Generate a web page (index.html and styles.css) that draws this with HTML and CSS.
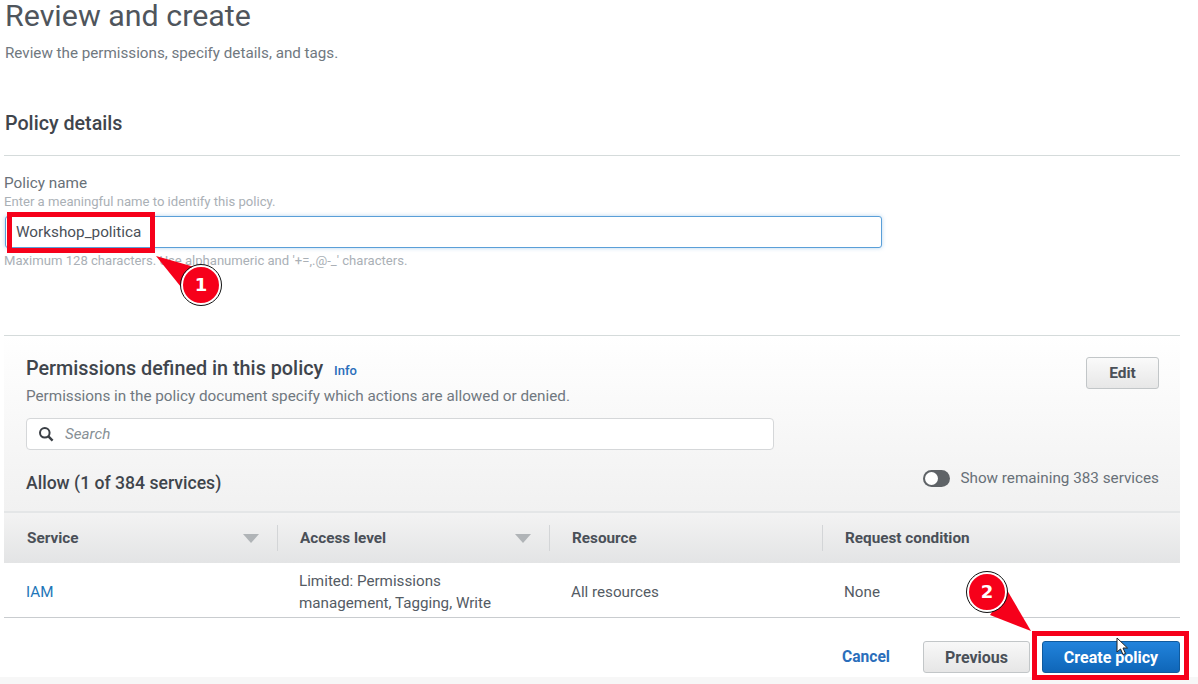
FILE: index.html
```html
<!DOCTYPE html>
<html lang="en">
<head>
  <meta charset="UTF-8" />
  <title>Review and create</title>
  <link rel="stylesheet" href="styles.css">
</head>
<body>
  <div class="page">
    <h1>Review and create</h1>
    <p class="subtitle">Review the permissions, specify details, and tags.</p>

    <h2 class="section-title">Policy details</h2>
    <div class="details">
      <div class="label">Policy name</div>
      <div class="hint">Enter a meaningful name to identify this policy.</div>
      <input class="name-input" type="text" value="Workshop_politica">
      <div class="hint hint-below">Maximum 128 characters. Use alphanumeric and '+=,.@-_' characters.</div>
    </div>

    <div class="panel">
      <div class="panel-head">
        <div>
          <h2 class="panel-title">Permissions defined in this policy <a class="info">Info</a></h2>
          <p class="panel-desc">Permissions in the policy document specify which actions are allowed or denied.</p>
        </div>
        <button class="btn btn-edit">Edit</button>
      </div>
      <div class="search">
        <svg width="16" height="16" viewBox="0 0 16 16"><circle cx="6.8" cy="6.8" r="4.8" fill="none" stroke="#3a3f45" stroke-width="2"/><path d="M10.4 10.4L14.6 14.6" stroke="#3a3f45" stroke-width="2.4"/></svg>
        <span>Search</span>
      </div>
      <div class="allow-row">
        <div class="allow">Allow (1 of 384 services)</div>
        <div class="toggle-wrap">
          <span class="toggle"><i></i></span>
          <span>Show remaining 383 services</span>
        </div>
      </div>
    </div>

    <div class="table">
      <div class="row row-head">
        <div class="cell c1">Service <b class="caret"></b></div>
        <div class="cell c2">Access level <b class="caret"></b></div>
        <div class="cell c3">Resource</div>
        <div class="cell c4">Request condition</div>
      </div>
      <div class="row row-body">
        <div class="cell c1"><a class="link">IAM</a></div>
        <div class="cell c2">Limited: Permissions management, Tagging, Write</div>
        <div class="cell c3">All resources</div>
        <div class="cell c4">None</div>
      </div>
    </div>

    <div class="actions">
      <a class="cancel">Cancel</a>
      <button class="btn btn-prev">Previous</button>
      <button class="btn btn-primary">Create policy</button>
    </div>
  </div>
  <div class="bottom-strip"></div>

  <!-- red markers drawn on top of the capture -->
  <svg class="arrows" width="1198" height="684" viewBox="0 0 1198 684">
    <path d="M156 256L198 268L181 287Z" fill="#f6001a"/>
    <path d="M1031 631L1007 590L990 615Z" fill="#f6001a"/>
  </svg>
  <div class="mark mark-one"></div>
  <div class="mark mark-two"></div>
  <div class="badge badge-one">1</div>
  <div class="badge badge-two">2</div>
  <svg class="cursor" width="14" height="20" viewBox="0 0 14 20"><path d="M1 1L1 15L4.5 12L7 17.5L9.5 16.5L7 11L11.5 11Z" fill="#fff" stroke="#222" stroke-width="1"/></svg>
</body>
</html>
```

FILE: styles.css
```css
body {
  margin: 0;
  height: 684px;
  overflow: hidden;
  background: #fff;
  font-family: Roboto, sans-serif;
  color: #545b64;
}

.page {
  width: 1176px;
  margin-left: 4px;
}

h1 {
  margin: 0;
  padding-left: 1px;
  font-size: 30.4px;
  font-weight: 400;
  line-height: 32px;
  color: #4f555c;
}

.subtitle {
  margin: 12px 0 0;
  padding-left: 1px;
  font-size: 15.2px;
  line-height: 18px;
  color: #707880;
}

.section-title {
  margin: 46px 0 0;
  height: 47px;
  padding-left: 1px;
  font-size: 19.7px;
  font-weight: 500;
  line-height: 32px;
  color: #3f454c;
  border-bottom: 1px solid #d5dbdb;
}

.details {
  height: 180px;
  box-sizing: border-box;
  padding-top: 19px;
  border-bottom: 1px solid #d5dbdb;
}

.label {
  margin-bottom: 2px;
  font-size: 15.3px;
  line-height: 17px;
  color: #687078;
}

.hint {
  font-size: 13.1px;
  line-height: 16px;
  color: #aab0b6;
}

.hint-below {
  margin-top: 5px;
}

.name-input {
  display: block;
  width: 877px;
  height: 32px;
  box-sizing: border-box;
  margin: 6px 0 0 1px;
  padding: 0 10px;
  border: 1px solid #5a9fd8;
  border-radius: 3px;
  box-shadow: 0 0 4px rgba(90, 160, 220, 0.45);
  font-family: Roboto, sans-serif;
  font-size: 15.3px;
  color: #4a5058;
  outline: none;
}

.panel {
  height: 175px;
  box-sizing: border-box;
  padding: 0 21px 0 22px;
  background: linear-gradient(#fff, #f1f1f1);
}

.panel-head {
  display: flex;
  justify-content: space-between;
  align-items: flex-start;
}

.panel-title {
  margin: 18px 0 0;
  font-size: 19.8px;
  font-weight: 500;
  line-height: 30px;
  color: #3f454c;
}

.info {
  margin-left: 6px;
  font-size: 13px;
  font-weight: 500;
  color: #2a6ebb;
}

.panel-desc {
  margin: 1px 0 0;
  font-size: 15.25px;
  line-height: 18px;
  color: #707880;
}

.btn {
  box-sizing: border-box;
  height: 32px;
  border-radius: 3px;
  font-family: Roboto, sans-serif;
  font-size: 16px;
  font-weight: 700;
  color: #4a5058;
  border: 1px solid #c2c6c8;
  background: linear-gradient(#fafafa, #e7e7e7);
}

.btn-edit {
  width: 73px;
  margin-top: 21px;
  font-size: 15.5px;
}

.search {
  display: flex;
  align-items: center;
  gap: 11px;
  width: 748px;
  height: 32px;
  box-sizing: border-box;
  margin-top: 13px;
  padding-left: 11px;
  background: #fff;
  border: 1px solid #d5d7d9;
  border-radius: 4px;
  font-size: 15.2px;
  font-style: italic;
  color: #879096;
}

.allow-row {
  display: flex;
  justify-content: space-between;
  align-items: center;
  margin-top: 15px;
  height: 30px;
}

.allow {
  position: relative;
  top: 3px;
  font-size: 17.6px;
  font-weight: 500;
  color: #3f454c;
}

.toggle-wrap {
  display: flex;
  align-items: center;
  gap: 10px;
  position: relative;
  top: -2px;
  font-size: 15.25px;
  color: #687078;
}

.toggle {
  display: block;
  width: 27px;
  height: 17px;
  box-sizing: border-box;
  padding: 2px;
  border-radius: 9px;
  background: #5f6367;
}

.toggle i {
  display: block;
  width: 13px;
  height: 13px;
  border-radius: 50%;
  background: #fff;
}

.table {
  border-bottom: 1px solid #c9cccf;
}

.row {
  display: grid;
  grid-template-columns: 273px 272px 273px 1fr;
  align-items: center;
}

.row-head {
  height: 52px;
  box-sizing: border-box;
  border-top: 2px solid #e4e6e7;
  background: linear-gradient(#f3f3f3, #e3e4e5);
  font-size: 15.3px;
  font-weight: 700;
  color: #4a5058;
}

.row-body {
  height: 54px;
  box-sizing: border-box;
  padding-top: 3px;
  font-size: 15.2px;
  line-height: 22px;
  color: #545b64;
}

.cell {
  position: relative;
  padding-left: 22px;
  padding-right: 40px;
}

.row-head .cell + .cell {
  border-left: 1px solid #d3d5d7;
  height: 26px;
  line-height: 26px;
}

.row-head .c1 {
  height: 26px;
  line-height: 26px;
  padding-left: 23px;
}

.row-body .c3 {
  padding-right: 0;
}

.caret {
  position: absolute;
  right: 18px;
  top: 9px;
  width: 0;
  height: 0;
  border-left: 8px solid transparent;
  border-right: 8px solid transparent;
  border-top: 9px solid #b0b4b7;
}

.link {
  color: #1e76b8;
}

.actions {
  display: flex;
  justify-content: flex-end;
  align-items: center;
  margin-top: 23px;
}

.cancel {
  margin-right: 33px;
  font-size: 15.6px;
  font-weight: 700;
  color: #2a6ebb;
}

.btn-prev {
  width: 107px;
  margin-right: 12px;
  background: linear-gradient(#f8f8f8, #e6e6e6);
}

.btn-primary {
  width: 138px;
  border: 1px solid #0f5a9e;
  color: #fff;
  background: linear-gradient(#2183dc, #0f66b8);
}

.bottom-strip {
  position: absolute;
  left: 0;
  top: 677px;
  width: 1198px;
  height: 7px;
  background: #f7f7f7;
}

.arrows {
  position: absolute;
  left: 0;
  top: 0;
}

.mark {
  position: absolute;
  box-sizing: border-box;
  border: 5px solid #f6001a;
}

.mark-one {
  left: 7px;
  top: 212px;
  width: 148px;
  height: 41px;
}

.mark-two {
  left: 1032px;
  top: 631px;
  width: 157px;
  height: 49px;
}

.badge {
  position: absolute;
  width: 40px;
  height: 40px;
  box-sizing: border-box;
  border-radius: 50%;
  border: 2px solid #fff;
  outline: 1px solid #111;
  background: #f6001a;
  color: #fff;
  font-family: "DejaVu Sans", sans-serif;
  font-size: 18px;
  font-weight: 700;
  line-height: 36px;
  text-align: center;
}

.badge-one {
  left: 181px;
  top: 265px;
}

.badge-two {
  left: 967px;
  top: 572px;
}

.cursor {
  position: absolute;
  left: 1116px;
  top: 637px;
}
```
